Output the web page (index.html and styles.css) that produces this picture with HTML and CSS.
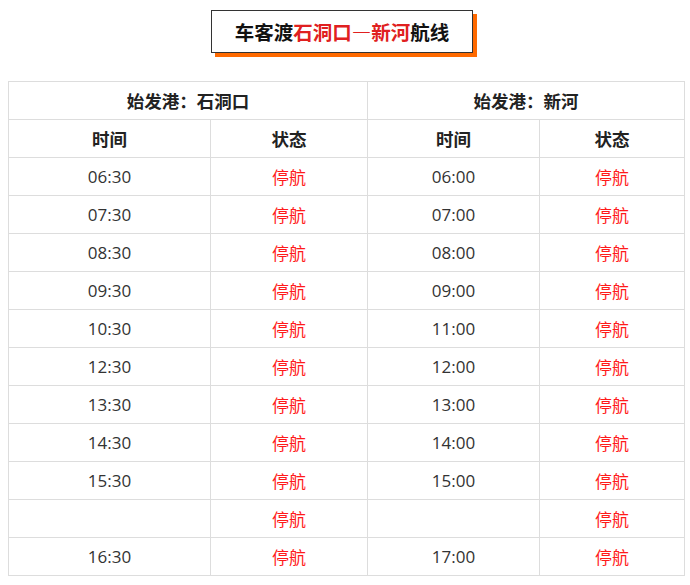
FILE: index.html
```html
<!DOCTYPE html>
<html lang="zh">
<head>
<meta charset="utf-8">
<link rel="stylesheet" href="styles.css">
</head>
<body>
<div class="title-wrap">
  <div class="title">车客渡<span class="red">石洞口<span class="dash">—</span>新河</span>航线</div>
</div>
<table class="sched">
  <colgroup>
    <col class="c1"><col class="c2"><col class="c3"><col class="c4">
  </colgroup>
  <tr class="head"><th colspan="2">始发港：石洞口</th><th colspan="2">始发港：新河</th></tr>
  <tr class="head"><th>时间</th><th>状态</th><th>时间</th><th>状态</th></tr>
  <tr><td>06:30</td><td class="st">停航</td><td>06:00</td><td class="st">停航</td></tr>
  <tr><td>07:30</td><td class="st">停航</td><td>07:00</td><td class="st">停航</td></tr>
  <tr><td>08:30</td><td class="st">停航</td><td>08:00</td><td class="st">停航</td></tr>
  <tr><td>09:30</td><td class="st">停航</td><td>09:00</td><td class="st">停航</td></tr>
  <tr><td>10:30</td><td class="st">停航</td><td>11:00</td><td class="st">停航</td></tr>
  <tr><td>12:30</td><td class="st">停航</td><td>12:00</td><td class="st">停航</td></tr>
  <tr><td>13:30</td><td class="st">停航</td><td>13:00</td><td class="st">停航</td></tr>
  <tr><td>14:30</td><td class="st">停航</td><td>14:00</td><td class="st">停航</td></tr>
  <tr><td>15:30</td><td class="st">停航</td><td>15:00</td><td class="st">停航</td></tr>
  <tr><td></td><td class="st">停航</td><td></td><td class="st">停航</td></tr>
  <tr><td>16:30</td><td class="st">停航</td><td>17:00</td><td class="st">停航</td></tr>
</table>
</body>
</html>
```
FILE: styles.css
```css
html, body { background: #fff; }
body {
  margin: 8px 0 0 8px;
  font-family: "Open Sans", "Noto Sans CJK SC", sans-serif;
  color: #333;
}
.title-wrap {
  display: flex;
  justify-content: center;
  padding-top: 2px;
  padding-right: 14px;
  margin-bottom: 28px;
}
.title {
  width: 260px;
  height: 41px;
  border: 1px solid #333;
  box-shadow: 4px 4px 0 #ff6a00;
  display: flex;
  align-items: center;
  justify-content: center;
  font-family: "Noto Sans CJK SC", sans-serif;
  font-weight: bold;
  font-size: 19.5px;
  color: #111;
  background: #fff;
}
.red { color: #e02020; }
.dash {
  display: inline-block;
  width: 1em;
  text-align: center;
  font-feature-settings: "fwid";
}
.sched {
  border-collapse: collapse;
  width: 676px;
  table-layout: fixed;
}
.c1 { width: 202px; }
.c2 { width: 157px; }
.c3 { width: 172px; }
.c4 { width: 145px; }
.sched th, .sched td {
  border: 1px solid #ddd;
  height: 37px;
  padding: 0;
  text-align: center;
  vertical-align: middle;
  font-size: 17px;
}
.sched th {
  font-family: "Noto Sans CJK SC", sans-serif;
  font-weight: bold;
  color: #222;
  font-size: 17.5px;
}
.sched td { color: #333; }
.sched td.st {
  color: #ff1a1a;
  font-family: "Noto Sans CJK SC", sans-serif;
}
```
